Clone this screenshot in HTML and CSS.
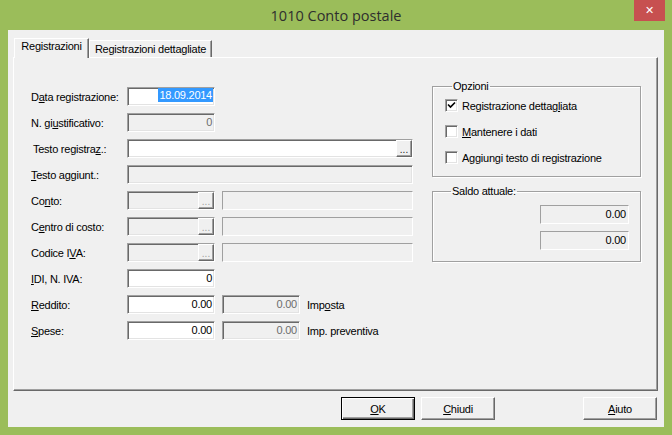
FILE: index.html
```html
<!DOCTYPE html>
<html lang="it">
<head>
  <meta charset="UTF-8" />
  <title>1010 Conto postale</title>
  <link rel="stylesheet" href="styles.css">
</head>
<body>
<div class="window">
  <div class="titlebar">
    <span class="title">1010 Conto postale</span>
    <button class="close">&#x2715;</button>
  </div>

  <div class="client">
    <div class="tabs">
      <div class="tab active">Registrazioni</div>
      <div class="tab">Registrazioni dettagliate</div>
    </div>

    <div class="panel">
      <!-- Left form -->
      <div class="form">
        <div class="row">
          <label>D<u>a</u>ta registrazione:</label>
          <div class="field w88"><span class="sel">18.09.2014</span></div>
        </div>
        <div class="row">
          <label>N. gi<u>u</u>stificativo:</label>
          <div class="field dis w88">0</div>
        </div>
        <div class="row">
          <label class="indent">Testo registra<u>z</u>.:</label>
          <div class="field browse w286"><span class="dots">...</span></div>
        </div>
        <div class="row">
          <label><u>T</u>esto aggiunt.:</label>
          <div class="field dis w286"></div>
        </div>
        <div class="row">
          <label>Co<u>n</u>to:</label>
          <div class="field dis browse w88"><span class="dots off">...</span></div>
          <div class="field flat w191"></div>
        </div>
        <div class="row">
          <label>C<u>e</u>ntro di costo:</label>
          <div class="field dis browse w88"><span class="dots off">...</span></div>
          <div class="field flat w191"></div>
        </div>
        <div class="row">
          <label>Codice I<u>V</u>A:</label>
          <div class="field dis browse w88"><span class="dots off">...</span></div>
          <div class="field flat w191"></div>
        </div>
        <div class="row">
          <label><u>I</u>DI, N. IVA:</label>
          <div class="field w88">0</div>
        </div>
        <div class="row">
          <label><u>R</u>eddito:</label>
          <div class="field w88">0.00</div>
          <div class="field dis w78">0.00</div>
          <span class="after">Imp<u>o</u>sta</span>
        </div>
        <div class="row">
          <label><u>S</u>pese:</label>
          <div class="field w88">0.00</div>
          <div class="field dis w78">0.00</div>
          <span class="after">Imp. preventiva</span>
        </div>
      </div>

      <!-- Right side -->
      <div class="side">
        <fieldset class="group opts">
          <legend>Opzioni</legend>
          <div class="check">
            <span class="box">
              <svg width="9" height="9" viewBox="0 0 9 9"><path d="M1 3.5 L3.5 6 L8 1.5" fill="none" stroke="#000" stroke-width="1.7"/></svg>
            </span>
            <span>Registrazione dettag<u>l</u>iata</span>
          </div>
          <div class="check"><span class="box"></span><span><u>M</u>antenere i dati</span></div>
          <div class="check"><span class="box"></span><span>A<u>g</u>giungi testo di registrazione</span></div>
        </fieldset>

        <fieldset class="group saldo">
          <legend>Saldo attuale:</legend>
          <div class="field flat w89">0.00</div>
          <div class="field flat w89">0.00</div>
        </fieldset>
      </div>
    </div>

    <div class="buttons">
      <button class="btn default"><u>O</u>K</button>
      <button class="btn"><u>C</u>hiudi</button>
      <button class="btn help"><u>A</u>iuto</button>
    </div>
  </div>
</div>
</body>
</html>
```

FILE: styles.css
```css
/* Base */
* {
  margin: 0;
  padding: 0;
  box-sizing: border-box;
}

body {
  width: 672px;
  height: 435px;
  overflow: hidden;
  font-family: "Liberation Sans", Arial, sans-serif;
  font-size: 11px;
  letter-spacing: -0.25px;
  color: #000;
}

u {
  text-decoration: underline;
  text-underline-offset: 1px;
}

/* Window frame */
.window {
  width: 672px;
  height: 435px;
  background-color: #9bbd5a;
  display: flex;
  flex-direction: column;
  position: relative;
}

.titlebar {
  height: 30px;
  display: flex;
  align-items: center;
  justify-content: center;
}

.title {
  font-family: "Open Sans", "Noto Sans", sans-serif;
  font-size: 14.5px;
  letter-spacing: 0;
  color: #2e2e2e;
  margin-top: 1px;
}

.close {
  position: absolute;
  top: 0;
  right: 7px;
  width: 31px;
  height: 21px;
  border: none;
  background-color: #c75050;
  color: #fff;
  font-family: "DejaVu Sans", sans-serif;
  font-size: 11px;
  font-weight: bold;
}

.client {
  flex: 1;
  margin: 0 8px 8px;
  background-color: #f0f0f0;
  padding: 8px 6px 0 5px;
  display: flex;
  flex-direction: column;
}

/* Tabs */
.tabs {
  display: flex;
  align-items: flex-end;
  height: 20px;
  margin-left: 1px;
  margin-bottom: -1px;
  position: relative;
  z-index: 1;
}

.tab {
  width: 123px;
  height: 17px;
  margin-bottom: 1px;
  padding-top: 1px;
  text-align: center;
  line-height: 15px;
  background-color: #f0f0f0;
  border: 1px solid;
  border-bottom: none;
  border-color: #fff #696969 transparent #fff;
  box-shadow: inset -1px 0 #a0a0a0;
}

.tab.active {
  width: 75px;
  height: 20px;
  margin-bottom: 0;
  padding-top: 0;
}

.panel {
  height: 334px;
  border: 1px solid;
  border-color: #fff #696969 #696969 #fff;
  box-shadow: inset -1px -1px #a0a0a0;
  display: flex;
  align-items: flex-start;
  gap: 19px;
  padding: 22px 0 0 17px;
}

/* Left form */
.form {
  width: 382px;
  margin-top: 7px;
  display: flex;
  flex-direction: column;
  gap: 7px;
}

.row {
  display: flex;
  align-items: center;
  height: 19px;
}

.row label {
  width: 96px;
  flex-shrink: 0;
}

.row label.indent {
  padding-left: 2px;
}

.after {
  margin-left: 7px;
}

.field {
  height: 19px;
  flex-shrink: 0;
  background-color: #fff;
  border: 1px solid;
  border-color: #a0a0a0 #fff #fff #a0a0a0;
  box-shadow: inset 1px 1px #696969, inset -1px -1px #e3e3e3;
  text-align: right;
  line-height: 17px;
  padding: 0 2px 0 3px;
  white-space: nowrap;
}

.field + .field {
  margin-left: 7px;
}

.field.dis {
  background-color: #f0f0f0;
  color: #6d6d6d;
}

.field.flat {
  background-color: #f0f0f0;
  box-shadow: none;
  border-color: #a0a0a0 #fff #fff #a0a0a0;
}

.field.browse {
  display: flex;
  justify-content: flex-end;
  padding: 0;
}

.dots {
  width: 16px;
  height: 17px;
  background-color: #f0f0f0;
  border: 1px solid;
  border-color: #fff #696969 #696969 #fff;
  box-shadow: inset -1px -1px #a0a0a0;
  text-align: center;
  line-height: 17px;
  font-size: 10px;
  color: #222;
  letter-spacing: 0;
}

.dots.off {
  color: #a0a0a0;
}

.sel {
  display: inline-block;
  background-color: #3399ff;
  color: #fff;
  line-height: 14px;
  margin-right: -1px;
  padding: 0 1px;
  vertical-align: 1px;
}

.w88 { width: 88px; }
.w89 { width: 89px; }
.w78 { width: 78px; }
.w191 { width: 191px; }
.w286 { width: 286px; }

/* Group boxes */
.side {
  width: 209px;
  display: flex;
  flex-direction: column;
  gap: 8px;
}

.group {
  border: 1px solid #a0a0a0;
  box-shadow: inset 1px 1px #fff, 1px 1px #fff;
}

.group legend {
  margin-left: 7px;
  padding: 0 1px;
  line-height: 13px;
}

.opts {
  padding: 6px 12px 12px;
  display: flex;
  flex-direction: column;
  gap: 13px;
}

.check {
  display: flex;
  align-items: center;
  gap: 4px;
  height: 13px;
}

.box {
  width: 13px;
  height: 13px;
  background-color: #fff;
  border: 1px solid;
  border-color: #a0a0a0 #fff #fff #a0a0a0;
  box-shadow: inset 1px 1px #696969, inset -1px -1px #e3e3e3;
  display: flex;
  align-items: center;
  justify-content: center;
}

.saldo {
  padding: 7px 11px 11px;
  display: flex;
  flex-direction: column;
  align-items: flex-end;
  gap: 7px;
}

.saldo .field {
  margin-left: 0;
  color: #000;
}

/* Bottom buttons */
.buttons {
  display: flex;
  justify-content: flex-end;
  gap: 6px;
  margin-top: 6px;
  padding-right: 1px;
}

.btn {
  width: 74px;
  height: 23px;
  font-family: "Liberation Sans", Arial, sans-serif;
  font-size: 11px;
  letter-spacing: -0.25px;
  color: #000;
  background-color: #f0f0f0;
  border: 1px solid;
  border-color: #fff #696969 #696969 #fff;
  box-shadow: inset -1px -1px #a0a0a0;
}

.btn.default {
  border: 1px solid #000;
  box-shadow: inset 1px 1px #fff, inset -1px -1px #696969, inset -2px -2px #a0a0a0;
}

.btn.help {
  margin-left: 82px;
}
```
